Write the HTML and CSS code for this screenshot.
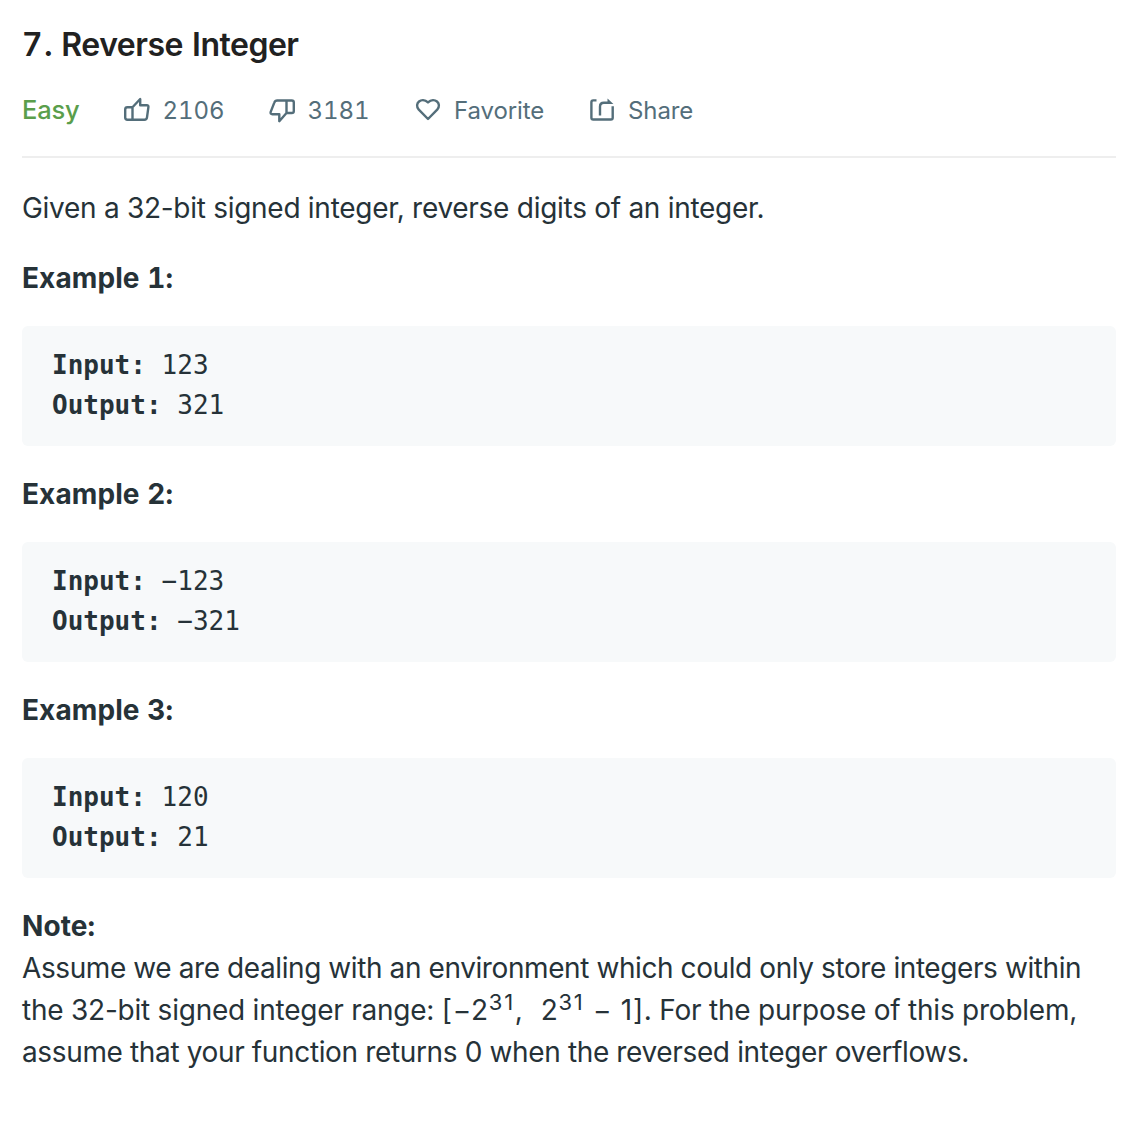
FILE: index.html
```html
<!DOCTYPE html>
<html lang="en">
<head>
<meta charset="utf-8">
<title>Reverse Integer</title>
<link rel="stylesheet" href="styles.css">
</head>
<body>
<main class="problem">
  <h1 class="title"><span class="number">7</span>. Reverse Integer</h1>
  <div class="toolbar">
    <span class="difficulty">Easy</span>
    <span class="action like"><svg class="icon" viewBox="0 0 28 28"><path d="M9.5 12.2 17.2 4V10.2H23.8Q25.7 10.2 25.4 12.1L24 22.4Q23.7 24.8 21.4 24.8H4.4Q2.2 24.8 2.2 22.6V14.4Q2.2 12.2 4.4 12.2ZM9.5 12.2V24.8"/></svg><span class="label count">2106</span></span>
    <span class="action dislike"><svg class="icon" viewBox="0 0 28 28"><path d="M18.5 18 11.3 26.2V19.2H4.4Q2 19.2 2.7 16.9L6.3 7.6Q7 5.5 9.2 5.5H23.7Q25.8 5.5 25.8 7.6V15.9Q25.8 18 23.7 18ZM18.5 18V5.5"/></svg><span class="label count">3181</span></span>
    <span class="action favorite"><svg class="icon" viewBox="0 0 28 28"><path d="M14 24 4.8 14.6C-.5 8.6 7.6 1.4 14 7.4 20.4 1.4 28.5 8.6 23.2 14.6Z"/></svg><span class="label">Favorite</span></span>
    <span class="action share"><svg class="icon" viewBox="0 0 28 28"><path d="M8.5 5.4H5.2Q3.4 5.4 3.4 7.2V22.7Q3.4 24.5 5.2 24.5H22.9Q24.7 24.5 24.7 22.7V11.2M12 20.5V11.7Q12 7.8 15.9 7.8H20"/><path class="solid" d="M19.5 3.4 25.4 8.9H19.5Z"/></svg><span class="label">Share</span></span>
  </div>
  <p class="text intro">Given a 32-bit signed integer, reverse digits of an integer.</p>
  <h2 class="text heading">Example 1:</h2>
  <pre class="sample"><b>Input:</b> 123
<b>Output:</b> 321</pre>
  <h2 class="text heading">Example 2:</h2>
  <pre class="sample"><b>Input:</b> −123
<b>Output:</b> −321</pre>
  <h2 class="text heading">Example 3:</h2>
  <pre class="sample"><b>Input:</b> 120
<b>Output:</b> 21</pre>
  <h2 class="text heading">Note:</h2>
  <p class="text note"><span class="line l1">Assume we are dealing with an environment which could only store integers within</span>
  <span class="line l2">the 32-bit signed integer range: <span class="math">[−2<sup>31</sup>,&nbsp; 2<sup>31</sup> − 1]</span>. For the purpose of this problem,</span>
  <span class="line l3">assume that your function returns 0 when the reversed integer overflows.</span></p>
</main>
</body>
</html>
```
FILE: styles.css
```css
body {
  margin: 0;
  background: #fff;
  color: #263238;
  font-family: Inter, "Liberation Sans", sans-serif;
}
.problem {
  padding: 24px 26px 0 22px;
}
.title {
  margin: 0;
  padding-left: 1px;
  font-size: 32px;
  line-height: 42px;
  font-weight: 600;
  letter-spacing: -0.5px;
  word-spacing: 1.5px;
  color: #212121;
}
.title .number { letter-spacing: 1.8px; }
.toolbar {
  display: flex;
  height: 90px;
  border-bottom: 2px solid #eee;
  color: #546e7a;
  font-size: 24px;
  line-height: 34px;
  box-sizing: border-box;
  padding-top: 27px;
  margin-bottom: 29px;
  margin-top: 2px;
}
.difficulty {
  width: 101px;
  font-size: 25.5px;
  line-height: 29px;
  letter-spacing: -0.2px;
  font-weight: 500;
  color: #5a9e4b;
}
.action {
  display: flex;
  gap: 12px;
}
.icon {
  width: 28px;
  height: 28px;
  flex: none;
  fill: none;
  stroke: #546e7a;
  stroke-width: 2.4;
  stroke-linejoin: round;
}
.icon .solid {
  fill: #546e7a;
  stroke: none;
}
.like { width: 145px; margin-left: -0.5px; }
.dislike { width: 146.5px; }
.favorite { width: 174px; }
.label { letter-spacing: -0.1px; line-height: 32px; }
.count {
  font-variant-numeric: tabular-nums;
  letter-spacing: -0.1px;
}
.text {
  margin: 0;
  font-size: 28px;
  line-height: 42px;
  white-space: nowrap;
}
.intro { letter-spacing: -0.28px; margin-bottom: 28px; }
.heading {
  font-weight: 650;
  letter-spacing: 0.1px;
  font-variant-numeric: tabular-nums;
}
.sample {
  margin: 27px 0;
  height: 120px;
  box-sizing: border-box;
  padding: 19px 30px;
  border-radius: 6px;
  background: #f7f9fa;
  font: 26px/40px "DejaVu Sans Mono", monospace;
}
.line { display: block; }
.l1 { letter-spacing: -0.41px; }
.l2 { letter-spacing: -0.23px; }
.l3 { letter-spacing: -0.36px; }
.math { letter-spacing: 0.7px; }
.math sup {
  font-size: 22px;
  line-height: 0;
  letter-spacing: 1.7px;
  vertical-align: 10px;
}
```
